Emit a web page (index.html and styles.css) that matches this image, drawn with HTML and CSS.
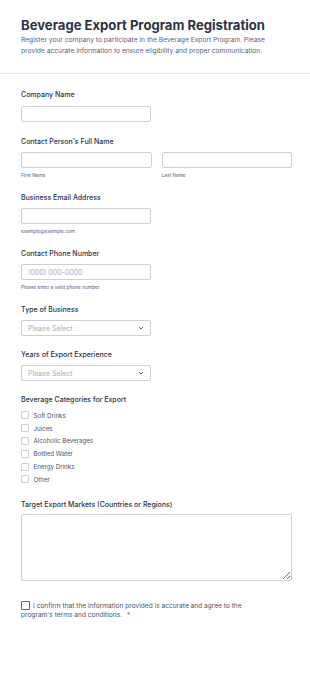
FILE: index.html
```html
<!DOCTYPE html>
<html lang="en">
<head>
    <meta charset="UTF-8">
    <meta name="viewport" content="width=device-width, initial-scale=1.0">
    <title>Beverage Export Program Registration</title>
    <link rel="stylesheet" href="styles.css">
</head>
<body>
    <div class="header">
        <h1 class="title">Beverage Export Program Registration</h1>
        <p class="desc">Register your company to participate in the Beverage Export Program. Please provide accurate information to ensure eligibility and proper communication.</p>
    </div>

    <form class="form">
        <div class="field">
            <label class="label">Company Name</label>
            <input class="input" type="text">
        </div>

        <div class="field">
            <label class="label">Contact Person's Full Name</label>
            <div class="name-row">
                <div class="name-col">
                    <input class="input full" type="text">
                    <div class="sub">First Name</div>
                </div>
                <div class="name-col">
                    <input class="input full" type="text">
                    <div class="sub">Last Name</div>
                </div>
            </div>
        </div>

        <div class="field">
            <label class="label">Business Email Address</label>
            <input class="input" type="text">
            <div class="sub">example@example.com</div>
        </div>

        <div class="field">
            <label class="label">Contact Phone Number</label>
            <input class="input" type="text" placeholder="(000) 000-0000">
            <div class="sub">Please enter a valid phone number.</div>
        </div>

        <div class="field select-field">
            <label class="label">Type of Business</label>
            <div class="select">
                <span>Please Select</span>
                <svg width="6" height="4" viewBox="0 0 6 4"><path d="M1 1 L3 3 L5 1" fill="none" stroke="#57647e" stroke-width="1"/></svg>
            </div>
        </div>

        <div class="field select-field">
            <label class="label">Years of Export Experience</label>
            <div class="select">
                <span>Please Select</span>
                <svg width="6" height="4" viewBox="0 0 6 4"><path d="M1 1 L3 3 L5 1" fill="none" stroke="#57647e" stroke-width="1"/></svg>
            </div>
        </div>

        <div class="field checks-field">
            <label class="label">Beverage Categories for Export</label>
            <ul class="checks">
                <li><span class="box"></span>Soft Drinks</li>
                <li><span class="box"></span>Juices</li>
                <li><span class="box"></span>Alcoholic Beverages</li>
                <li><span class="box"></span>Bottled Water</li>
                <li><span class="box"></span>Energy Drinks</li>
                <li><span class="box"></span>Other</li>
            </ul>
        </div>

        <div class="field">
            <label class="label">Target Export Markets (Countries or Regions)</label>
            <textarea class="textarea"></textarea>
        </div>

        <div class="confirm">
            <span class="box dark"></span>I confirm that the information provided is accurate and agree to the program's terms and conditions.<span class="req">*</span>
        </div>
    </form>
</body>
</html>
```

FILE: styles.css
```css
*{
    margin: 0;
    padding: 0;
    box-sizing: border-box;
}

body{
    background: #fff;
    font-family: Inter, "Noto Sans", sans-serif;
    color: #2c3345;
    width: 310px;
}

.header{
    padding: 16px 18px 0 21px;
    height: 74px;
    border-bottom: 1px solid #e6e8ee;
}
.title{
    font-size: 13.1px;
    font-weight: 700;
    line-height: 18px;
    color: #2c3345;
}
.desc{
    font-size: 6.7px;
    line-height: 11px;
    color: #57647e;
    margin-top: 1px;
    padding-right: 24px;
}

.form{
    padding: 16px 18px 40px 21px;
}

.field{
    margin-bottom: 15px;
}
.select-field{
    margin-bottom: 13.5px;
}
.label{
    display: block;
    font-size: 7px;
    font-weight: 500;
    line-height: 10px;
    margin-bottom: 5.5px;
    color: #2c3345;
}

.input{
    display: block;
    width: 130px;
    height: 16px;
    border: 1px solid #c9cfdb;
    border-radius: 2px;
    background: #fff;
    font-family: inherit;
    font-size: 7px;
    padding: 0 6px;
    outline: none;
}
.input::placeholder{
    color: #a5adbd;
}
.input.full{
    width: 100%;
}

.name-row{
    display: flex;
    gap: 10px;
}
.name-col{
    flex: 1;
}

.sub{
    font-size: 4.8px;
    line-height: 6px;
    margin-top: 4px;
    margin-bottom: -0.5px;
    color: #57647e;
}

.select{
    width: 130px;
    height: 16px;
    border: 1px solid #c9cfdb;
    border-radius: 2px;
    display: flex;
    align-items: center;
    justify-content: space-between;
    padding: 0 6px 0 6px;
    font-size: 7px;
    color: #a5adbd;
}

.checks{
    list-style: none;
    margin-top: -1px;
}
.checks li{
    display: flex;
    align-items: center;
    height: 12.8px;
    font-size: 6.2px;
    color: #4a5468;
}
.box{
    display: inline-block;
    width: 8px;
    height: 8px;
    border: 1px solid #c9cfdb;
    border-radius: 1px;
    margin-right: 4.5px;
    background: #fff;
    flex-shrink: 0;
}
.checks-field{
    margin-bottom: 14.5px;
}

.textarea{
    display: block;
    width: 100%;
    height: 67px;
    margin-top: -2px;
    border: 1px solid #c9cfdb;
    border-radius: 2px;
    font-family: inherit;
    resize: vertical;
    outline: none;
}

.confirm{
    margin-top: 20px;
    font-size: 6.6px;
    line-height: 9.5px;
    color: #4a5468;
    padding-right: 45px;
}
.box.dark{
    width: 9px;
    height: 9px;
    border-color: #57647e;
    vertical-align: -2px;
    margin-right: 3px;
}
.req{
    color: #f23a3c;
    margin-left: 5px;
}
```
